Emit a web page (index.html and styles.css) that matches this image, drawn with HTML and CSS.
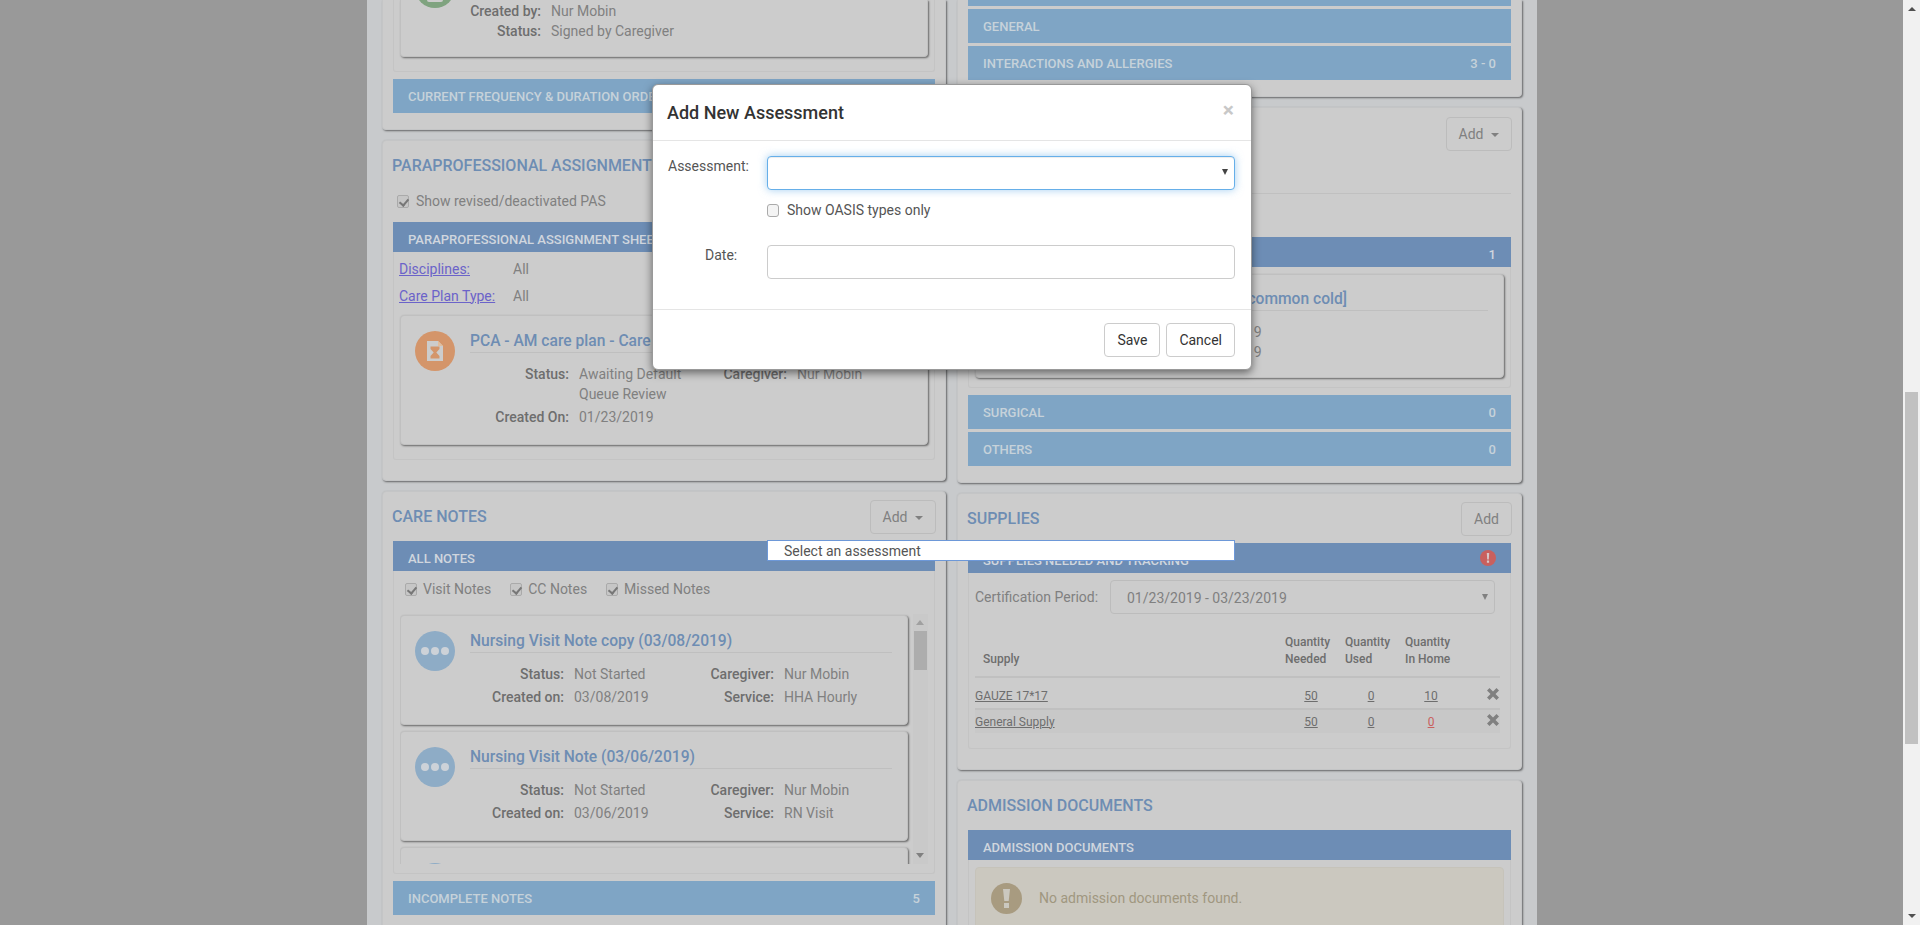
FILE: index.html
```html
<!DOCTYPE html>
<html lang="en">
<head>
    <meta charset="UTF-8">
    <meta name="viewport" content="width=device-width, initial-scale=1.0">
    <title>Patient Chart</title>
    <link rel="stylesheet" href="styles.css">
</head>
<body>
    <div class="stage">
        <div class="container">

            <!-- left column -->
            <div class="col col-left">
                <div class="card card-first">
                    <div class="wrap wrap-first">
                        <div class="note note-first">
                            <div class="circle circle-green circle-clipped">
                                <svg width="18" height="28" viewBox="0 0 18 28"><path d="M1 0h16v26a2 2 0 0 1-2 2H3a2 2 0 0 1-2-2z" fill="#ccc"/></svg>
                            </div>
                            <div class="meta-simple">
                                <div class="meta-row"><span class="lbl">Created by:</span><span>Nur Mobin</span></div>
                                <div class="meta-row"><span class="lbl">Status:</span><span>Signed by Caregiver</span></div>
                            </div>
                        </div>
                    </div>
                    <div class="bar">CURRENT FREQUENCY &amp; DURATION ORDERS</div>
                </div>

                <div class="card card-pas">
                    <div class="card-head head-pas"><h2>PARAPROFESSIONAL ASSIGNMENT SHEETS</h2></div>
                    <label class="check check-pas"><span class="box checked"></span>Show revised/deactivated PAS</label>
                    <div class="bar bar-dark">PARAPROFESSIONAL ASSIGNMENT SHEETS</div>
                    <div class="wrap wrap-pas">
                        <div class="filter"><a href="#">Disciplines:</a><span>All</span></div>
                        <div class="filter"><a href="#">Care Plan Type:</a><span>All</span></div>
                        <div class="note note-pas">
                            <div class="circle circle-orange">
                                <svg width="16" height="20" viewBox="0 0 16 20"><path d="M0 0h11l5 5v15H0z" fill="#ccc"/><path d="M11 0l5 5h-5z" fill="#e2bd9c"/><path d="M3.500 5.500h9v2.500L9.300 11.500l3.200 3.500v2.500h-9V15l3.200-3.500L3.500 8z" fill="#d4956a"/></svg>
                            </div>
                            <div class="note-body">
                                <div class="note-title">PCA - AM care plan - Care Plan</div>
                                <div class="fields fields-pas">
                                    <span class="lbl">Status:</span><span>Awaiting Default<br>Queue Review</span>
                                    <span class="lbl">Caregiver:</span><span>Nur Mobin</span>
                                    <span class="lbl">Created On:</span><span>01/23/2019</span>
                                </div>
                            </div>
                        </div>
                    </div>
                </div>

                <div class="card card-notes">
                    <div class="card-head head-notes">
                        <h2>CARE NOTES</h2>
                        <button class="btn btn-add">Add <i class="caret"></i></button>
                    </div>
                    <div class="bar bar-dark">ALL NOTES</div>
                    <div class="wrap wrap-notes">
                        <div class="checks">
                            <label class="check"><span class="box checked"></span>Visit Notes</label>
                            <label class="check"><span class="box checked"></span>CC Notes</label>
                            <label class="check"><span class="box checked"></span>Missed Notes</label>
                        </div>
                        <div class="scroller">
                            <div class="scroll-list">
                                <div class="note note-visit">
                                    <div class="circle circle-blue"><i></i><i></i><i></i></div>
                                    <div class="note-body">
                                        <div class="note-title">Nursing Visit Note copy (03/08/2019)</div>
                                        <div class="fields">
                                            <span class="lbl">Status:</span><span>Not Started</span>
                                            <span class="lbl">Caregiver:</span><span>Nur Mobin</span>
                                            <span class="lbl">Created on:</span><span>03/08/2019</span>
                                            <span class="lbl">Service:</span><span>HHA Hourly</span>
                                        </div>
                                    </div>
                                </div>
                                <div class="note note-visit">
                                    <div class="circle circle-blue"><i></i><i></i><i></i></div>
                                    <div class="note-body">
                                        <div class="note-title">Nursing Visit Note (03/06/2019)</div>
                                        <div class="fields">
                                            <span class="lbl">Status:</span><span>Not Started</span>
                                            <span class="lbl">Caregiver:</span><span>Nur Mobin</span>
                                            <span class="lbl">Created on:</span><span>03/06/2019</span>
                                            <span class="lbl">Service:</span><span>RN Visit</span>
                                        </div>
                                    </div>
                                </div>
                                <div class="note note-visit">
                                    <div class="circle circle-blue"><i></i><i></i><i></i></div>
                                </div>
                            </div>
                            <div class="mini-scroll">
                                <i class="arrow-up"></i>
                                <div class="mini-thumb"></div>
                                <i class="arrow-down"></i>
                            </div>
                        </div>
                    </div>
                    <div class="bar">INCOMPLETE NOTES<span>5</span></div>
                </div>
            </div>

            <!-- right column -->
            <div class="col col-right">
                <div class="card card-orders">
                    <div class="bar bar-cut"></div>
                    <div class="bar">GENERAL</div>
                    <div class="bar">INTERACTIONS AND ALLERGIES<span>3 - 0</span></div>
                </div>

                <div class="card card-meds">
                    <div class="card-head head-meds">
                        <h2>DIAGNOSES</h2>
                        <button class="btn btn-add">Add <i class="caret"></i></button>
                    </div>
                    <div class="rule"></div>
                    <div class="bar bar-dark">MEDICAL<span>1</span></div>
                    <div class="wrap wrap-meds">
                        <div class="note note-cold">
                            <div class="note-body">
                                <div class="note-title note-title-end">Acute nasopharyngitis [common cold]</div>
                                <div class="dates">
                                    <div>01/23/2019</div>
                                    <div>03/23/2019</div>
                                </div>
                            </div>
                        </div>
                    </div>
                    <div class="bar">SURGICAL<span>0</span></div>
                    <div class="bar">OTHERS<span>0</span></div>
                </div>

                <div class="card card-supplies">
                    <div class="card-head head-supplies">
                        <h2>SUPPLIES</h2>
                        <button class="btn btn-add">Add</button>
                    </div>
                    <div class="bar bar-dark">SUPPLIES NEEDED AND TRACKING
                        <svg class="alert-dot" width="16" height="16" viewBox="0 0 16 16"><circle cx="8" cy="8" r="8" fill="#c9605e"/><path d="M6.800 3h2.400l-.4 6.500H7.200zM6.900 10.500h2.200v2.200H6.900z" fill="#d8c8c8"/></svg>
                    </div>
                    <div class="wrap wrap-supplies">
                        <div class="cert">
                            <span class="cert-label">Certification Period:</span>
                            <div class="cert-select">01/23/2019 - 03/23/2019<i class="mini-arrow"></i></div>
                        </div>
                        <table class="supply-table">
                            <thead>
                                <tr>
                                    <th class="col-name">Supply</th>
                                    <th class="col-qty">Quantity<br>Needed</th>
                                    <th class="col-qty">Quantity<br>Used</th>
                                    <th class="col-qty">Quantity<br>In Home</th>
                                    <th class="col-del"></th>
                                </tr>
                            </thead>
                            <tbody>
                                <tr>
                                    <td><a href="#">GAUZE 17*17</a></td>
                                    <td class="num"><a href="#">50</a></td>
                                    <td class="num"><a href="#">0</a></td>
                                    <td class="num"><a href="#">10</a></td>
                                    <td class="del"><svg width="12" height="12" viewBox="0 0 12 12"><path d="M2.500 0L6 3.500 9.500 0 12 2.500 8.500 6 12 9.500 9.500 12 6 8.500 2.500 12 0 9.500 3.500 6 0 2.500z" fill="#808080"/></svg></td>
                                </tr>
                                <tr class="striped">
                                    <td><a href="#">General Supply</a></td>
                                    <td class="num"><a href="#">50</a></td>
                                    <td class="num"><a href="#">0</a></td>
                                    <td class="num"><a href="#" class="low">0</a></td>
                                    <td class="del"><svg width="12" height="12" viewBox="0 0 12 12"><path d="M2.500 0L6 3.500 9.500 0 12 2.500 8.500 6 12 9.500 9.500 12 6 8.500 2.500 12 0 9.500 3.500 6 0 2.500z" fill="#808080"/></svg></td>
                                </tr>
                            </tbody>
                        </table>
                    </div>
                </div>

                <div class="card card-docs">
                    <div class="card-head head-docs"><h2>ADMISSION DOCUMENTS</h2></div>
                    <div class="bar bar-dark">ADMISSION DOCUMENTS</div>
                    <div class="wrap wrap-docs">
                        <div class="notice">
                            <svg width="31" height="31" viewBox="0 0 31 31"><circle cx="15.500" cy="15.500" r="15.500" fill="#a89b80"/><path d="M12 6h7l-1.300 12h-4.400zM13 20h5v5h-5z" fill="#cbc8bf"/></svg>
                            <span>No admission documents found.</span>
                        </div>
                    </div>
                </div>
            </div>
        </div>
    </div>

    <div class="page-scroll">
        <i class="page-up"></i>
        <div class="page-thumb"></div>
        <i class="page-down"></i>
    </div>

    <!-- modal -->
    <div class="modal">
        <div class="modal-header">
            <h4>Add New Assessment</h4>
            <span class="close">&times;</span>
        </div>
        <div class="modal-body">
            <div class="form-row">
                <label class="form-label">Assessment:</label>
                <div class="form-field">
                    <div class="input input-focus"><i class="mini-arrow mini-arrow-dark"></i></div>
                    <label class="check check-oasis"><span class="box"></span>Show OASIS types only</label>
                </div>
            </div>
            <div class="form-row">
                <label class="form-label form-label-date">Date:</label>
                <div class="form-field"><div class="input"></div></div>
            </div>
        </div>
        <div class="modal-footer">
            <button class="btn btn-light">Save</button>
            <button class="btn btn-light btn-cancel">Cancel</button>
        </div>
    </div>
    <div class="dropdown">Select an assessment</div>
</body>
</html>
```

FILE: styles.css
```css
* {
    box-sizing: border-box;
}

html, body {
    height: 925px;
    margin: 0;
    overflow: hidden;
}

body {
    display: flex;
    background-color: #999;
    font-family: Roboto, "Liberation Sans", sans-serif;
    font-size: 14px;
    line-height: 20px;
    color: #808080;
}

.stage {
    flex: 1;
    height: 925px;
    overflow: hidden;
    display: flex;
    justify-content: center;
}

.container {
    width: 1170px;
    flex: none;
    margin-left: 1px;
    height: 925px;
    overflow: hidden;
    background-color: #c8cacc;
    padding: 0 15px;
    display: flex;
    justify-content: space-between;
}

.col {
    flex: none;
}

.col-left {
    width: 564px;
}

.col-right {
    width: 565px;
}

/* cards */
.card {
    background-color: #ccc;
    border: 1px solid #c4c5c6;
    border-radius: 4px;
    box-shadow: 1px 1px 2px rgba(0, 0, 0, 0.5);
    padding: 0 10px;
    margin-bottom: 10px;
}

.card-first {
    height: 130px;
    border-top: 0;
    border-radius: 0 0 4px 4px;
}

.card-pas {
    height: 341px;
}

.card-notes {
    height: 470px;
}

.card-orders {
    height: 97px;
    border-top: 0;
    border-radius: 0 0 4px 4px;
}

.card-meds {
    height: 376px;
}

.card-supplies {
    height: 277px;
}

.card-docs {
    height: 300px;
}

.card-head {
    display: flex;
    justify-content: space-between;
    align-items: center;
    margin: 0 -1px;
}

.card-head h2 {
    margin: 0;
    font-size: 16px;
    line-height: 24px;
    font-weight: 500;
    color: #6e8db3;
    white-space: nowrap;
}

.head-pas {
    height: 50px;
}

.head-notes {
    height: 49px;
    padding-top: 1px;
}

.head-meds {
    height: 43px;
    align-items: flex-end;
}

.head-supplies {
    height: 49px;
}

.head-docs {
    height: 49px;
}

.head-meds h2 {
    color: #ccc;
}

/* bars */
.bar {
    display: flex;
    justify-content: space-between;
    align-items: center;
    height: 34px;
    margin-bottom: 3px;
    padding: 2px 15px 0;
    background-color: #7fa5c5;
    color: #c6d2da;
    font-size: 13px;
    font-weight: 500;
    white-space: nowrap;
}

.bar-dark {
    height: 30px;
    margin-bottom: 0;
    padding-top: 6px;
    background-color: #6d8db5;
    color: #d0d6de;
}

.card-first .bar {
    margin-bottom: 0;
}

.bar-cut {
    height: 6px;
}

.alert-dot {
    margin-top: -6px;
}

.rule {
    height: 1px;
    margin-top: 42px;
    margin-bottom: 43px;
    background-color: #c0c0c0;
}

.wrap {
    border: 1px solid #c4c4c4;
    border-top: 0;
    border-radius: 0 0 3px 3px;
    padding: 0 6px;
}

.wrap-first {
    height: 72px;
    margin-bottom: 7px;
}

.wrap-pas {
    height: 208px;
    padding-top: 3px;
}

.wrap-notes {
    height: 303px;
    margin-bottom: 7px;
}

.wrap-meds {
    height: 121px;
    margin-bottom: 7px;
    padding-top: 7px;
}

.wrap-supplies {
    height: 176px;
    padding-top: 7px;
}

.wrap-docs {
    height: 200px;
    padding-top: 7px;
}

/* note cards */
.note {
    display: flex;
    background-color: #ccc;
    border: 1px solid #c0c0c0;
    border-radius: 4px;
    box-shadow: 1px 1px 2px rgba(0, 0, 0, 0.5);
    padding: 15px 15px 15px 14px;
    gap: 15px;
}

.note-first {
    height: 57px;
    border-top: 0;
    border-radius: 0 0 4px 4px;
    padding: 0 15px 0 14px;
}

.note-pas {
    height: 130px;
    margin-top: 6px;
}

.note-visit {
    width: 508px;
    height: 110px;
    margin-bottom: 6px;
}

.note-cold {
    height: 104px;
    padding-top: 14px;
}

.circle {
    flex: none;
    width: 40px;
    height: 40px;
    border-radius: 50%;
    display: flex;
    align-items: center;
    justify-content: center;
    gap: 2px;
}

.circle-green {
    background-color: #7fa37f;
}

.circle-clipped {
    margin-top: -32px;
}

.circle-orange {
    background-color: #d4956a;
}

.circle-blue {
    background-color: #8eacc6;
}

.circle-blue i {
    width: 8px;
    height: 8px;
    border-radius: 50%;
    background-color: #cdd2d8;
}

.note-body {
    flex: 1;
    min-width: 0;
}

.note-title {
    height: 22px;
    line-height: 20px;
    border-bottom: 1px solid #bfbfbf;
    font-size: 15.6px;
    font-weight: 500;
    color: #6e8db3;
    white-space: nowrap;
    overflow: hidden;
}

.note-title-end {
    text-align: right;
    padding-right: 141px;
}

.fields {
    display: grid;
    grid-template-columns: 94px 100px 90px 1fr;
    column-gap: 10px;
    row-gap: 3px;
    margin-top: 11px;
    white-space: nowrap;
}

.fields-pas {
    grid-template-columns: 99px 110px 88px 1fr;
}

.fields .lbl,
.meta-row .lbl {
    text-align: right;
}

.lbl {
    font-weight: 500;
    color: #6e6e6e;
}

.meta-simple {
    margin-top: 1px;
}

.meta-row {
    display: grid;
    grid-template-columns: 71px 1fr;
    column-gap: 10px;
}

.dates {
    margin-top: 11px;
    padding-left: 197px;
}

/* filters and checks */
.filter {
    display: flex;
    height: 27px;
    align-items: center;
    margin-left: -1px;
}

.filter a {
    width: 114px;
    color: #6b63c9;
}

.check {
    display: flex;
    align-items: center;
    white-space: nowrap;
}

.box {
    width: 12px;
    height: 13px;
    flex: none;
    margin-right: 6px;
    border: 1px solid #aaa;
    border-radius: 2px;
    background-color: #c6c6c6;
    position: relative;
}

.box.checked::after {
    content: "";
    position: absolute;
    left: 3px;
    top: 1px;
    width: 4px;
    height: 7px;
    border: solid #777;
    border-width: 0 2px 2px 0;
    transform: rotate(40deg);
}

.check-pas {
    height: 20px;
    margin-bottom: 11px;
    margin-left: 4px;
}

.check-pas .box {
    margin-right: 7px;
}

.checks {
    display: flex;
    height: 43px;
    padding: 8px 5px 0;
    gap: 19px;
}

.checks .check {
    height: 20px;
}

.scroller {
    display: flex;
    height: 250px;
    overflow: hidden;
    gap: 5px;
}

.scroll-list {
    flex: none;
    width: 508px;
    padding-top: 1px;
}

.mini-scroll {
    width: 16px;
    flex: none;
    position: relative;
    background-color: #c9c9c9;
}

.mini-thumb {
    position: absolute;
    left: 1px;
    top: 17px;
    width: 13px;
    height: 39px;
    background-color: #adadad;
}

.arrow-up, .arrow-down {
    position: absolute;
    left: 3px;
    border: 4px solid transparent;
}

.arrow-up {
    top: 6px;
    border-bottom: 5px solid #a0a0a0;
    border-top: 0;
}

.arrow-down {
    bottom: 6px;
    border-top: 5px solid #808080;
    border-bottom: 0;
}

/* buttons */
.btn {
    font-family: inherit;
    font-size: 14px;
    height: 34px;
    line-height: 20px;
    padding: 6px 12px;
    border: 1px solid #bcbcbc;
    border-radius: 4px;
    background-color: #ccc;
    color: #808080;
}

.caret {
    display: inline-block;
    margin-left: 4px;
    vertical-align: middle;
    border-top: 4px solid #808080;
    border-left: 4px solid transparent;
    border-right: 4px solid transparent;
}

/* supplies */
.cert {
    display: flex;
    align-items: center;
    height: 34px;
}

.cert-label {
    width: 135px;
    flex: none;
}

.cert-select {
    position: relative;
    width: 385px;
    height: 34px;
    line-height: 34px;
    padding-left: 16px;
    border: 1px solid #bcbcbc;
    border-radius: 4px;
}

.mini-arrow {
    position: absolute;
    right: 6px;
    top: 13px;
    border-top: 6px solid #808080;
    border-left: 3px solid transparent;
    border-right: 3px solid transparent;
}

.mini-arrow-dark {
    top: 12px;
    border-top-color: #444;
}

.supply-table {
    width: 525px;
    margin-top: 20px;
    border-collapse: separate;
    border-spacing: 0;
    table-layout: fixed;
    font-size: 12px;
}

.supply-table th {
    height: 44px;
    padding: 0 0 8px 8px;
    vertical-align: bottom;
    text-align: left;
    line-height: 17px;
    font-weight: 500;
    color: #6e6e6e;
    border-bottom: 2px solid #c0c0c0;
}

.col-name {
    width: 302px;
}

.col-qty {
    width: 60px;
}

.supply-table td {
    height: 32px;
    padding: 6px 0 0;
    border-bottom: 2px solid #c0c0c0;
}

.supply-table a {
    color: #6e6e6e;
}

.supply-table a.low {
    color: #c9605e;
}

.supply-table td.num {
    text-align: center;
    padding-left: 8px;
}

.supply-table td.del {
    text-align: right;
    padding: 10px 1px 0 0;
    vertical-align: top;
    line-height: 12px;
}

.supply-table .striped td {
    height: 23px;
    padding-top: 0;
    background-color: #c8c8c8;
    border-bottom: 0;
}

.supply-table .striped td.del {
    padding-top: 4px;
}

/* notice */
.notice {
    display: flex;
    align-items: flex-start;
    gap: 17px;
    height: 100px;
    padding: 15px;
    background-color: #cbc8bf;
    border: 1px solid #c6c3ba;
    border-radius: 4px;
    color: #a0977f;
}

.notice span {
    margin-top: 5px;
}

/* page scrollbar */
.page-scroll {
    position: relative;
    flex: none;
    width: 17px;
    height: 925px;
    background-color: #f1f1f1;
    padding: 392px 2px 0;
}

.page-thumb {
    width: 13px;
    height: 352px;
    background-color: #c1c1c1;
}

.page-up, .page-down {
    position: absolute;
    left: 5px;
    border-left: 4px solid transparent;
    border-right: 4px solid transparent;
}

.page-up {
    top: 7px;
    border-bottom: 4px solid #505050;
}

.page-down {
    bottom: 7px;
    border-top: 4px solid #505050;
}

/* modal */
.modal {
    position: absolute;
    left: 652px;
    top: 84px;
    width: 600px;
    height: 286px;
    background-color: #fff;
    border: 1px solid #999;
    border-radius: 6px;
    box-shadow: 0 3px 9px rgba(0, 0, 0, 0.5);
    color: #333;
}

.modal-header {
    display: flex;
    justify-content: space-between;
    height: 56px;
    padding: 15px 17px 15px 14px;
    border-bottom: 1px solid #e5e5e5;
}

.modal-header h4 {
    margin: 0;
    font-size: 18px;
    line-height: 25px;
    font-weight: 500;
}

.close {
    font-size: 21px;
    line-height: 20px;
    font-weight: 700;
    color: #c8c8c8;
}

.modal-body {
    height: 168px;
    padding: 15px 16px 0 15px;
    color: #555;
}

.form-row {
    display: flex;
}

.form-label {
    width: 99px;
    flex: none;
}

.form-label-date {
    padding-left: 37px;
}

.form-field {
    flex: 1;
}

.input {
    position: relative;
    height: 34px;
    border: 1px solid #ccc;
    border-radius: 4px;
    background-color: #fff;
}

.input-focus {
    border-color: #66afe9;
    box-shadow: inset 0 1px 1px rgba(0, 0, 0, 0.075), 0 0 8px rgba(102, 175, 233, 0.6);
}

.check-oasis {
    height: 20px;
    margin-top: 10px;
    margin-bottom: 25px;
}

.check-oasis .box {
    margin-right: 8px;
    background-color: #f4f4f4;
    border-color: #aaa;
    border-radius: 3px;
}

.modal-footer {
    display: flex;
    justify-content: flex-end;
    gap: 6px;
    padding: 13px 16px 0 0;
    border-top: 1px solid #e5e5e5;
}

.btn-light {
    background-color: #fff;
    border-color: #ccc;
    color: #333;
}

.btn-cancel {
    min-width: 68px;
}

.dropdown {
    position: absolute;
    left: 767px;
    top: 540px;
    width: 468px;
    height: 21px;
    padding-left: 16px;
    line-height: 20px;
    background-color: #fff;
    border: 1px solid #6d98d8;
    color: #555;
}
```
